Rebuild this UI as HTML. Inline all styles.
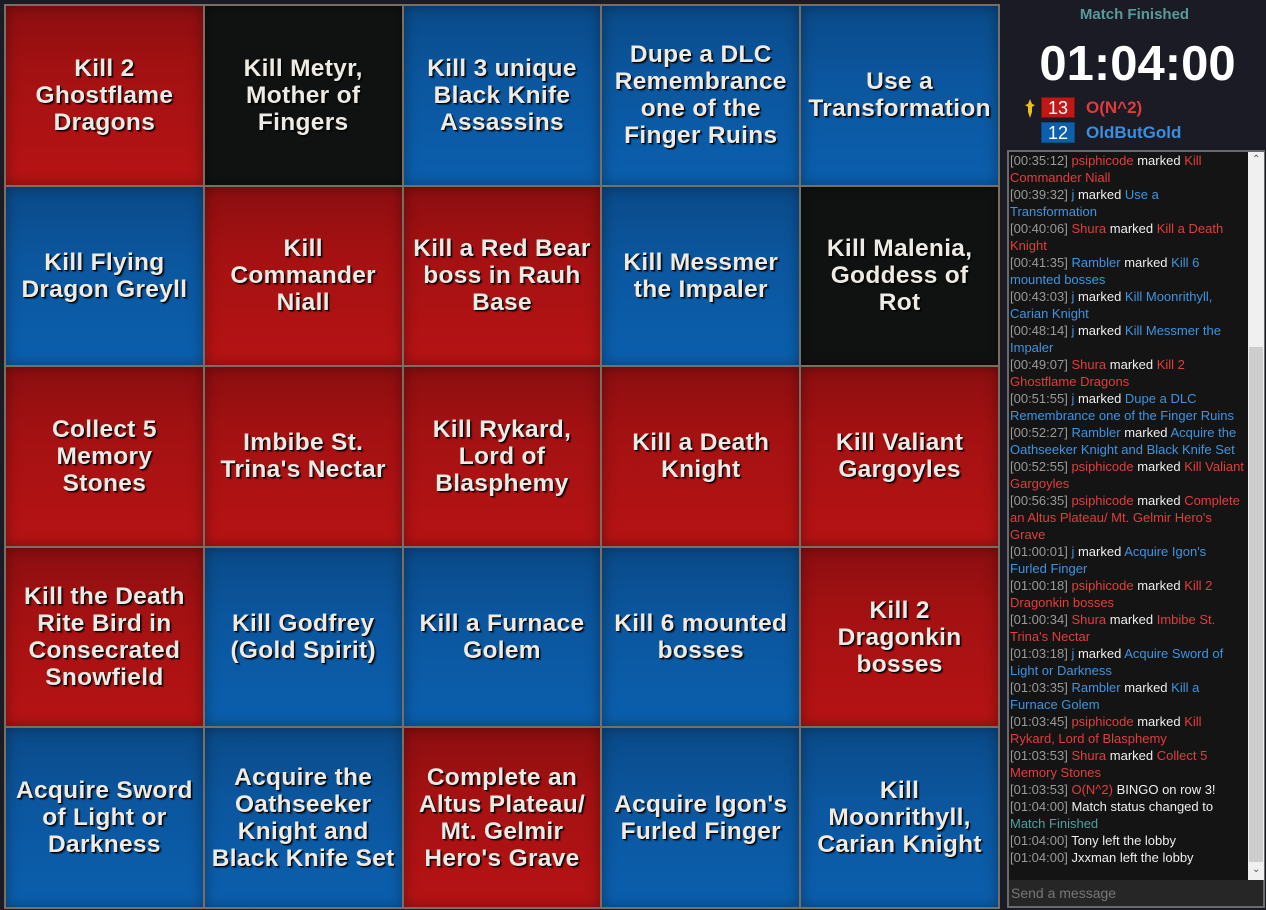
<!DOCTYPE html>
<html><head><meta charset="utf-8"><style>
*{margin:0;padding:0;box-sizing:border-box}
body{width:1266px;height:910px;background:#1b1b26;position:relative;overflow:hidden;font-family:"Liberation Sans",sans-serif}
#grid{position:absolute;left:4px;top:4px;width:996px;height:905px;background:#776f63;display:grid;grid-template-columns:repeat(5,1fr);grid-template-rows:repeat(5,1fr);gap:2px;padding:2px}
.c{display:flex;align-items:center;justify-content:center;text-align:center;color:#eeeae4;font-weight:bold;font-size:24.5px;line-height:27px;text-shadow:1px 1px 0 #000,2px 2px 1px rgba(0,0,0,.5);letter-spacing:.3px}
.r{background:linear-gradient(#8c0e10,#a31112 35%,#b71314);box-shadow:inset 0 0 14px rgba(0,0,0,.35)}
.b{background:linear-gradient(#0a4a88,#0b569e 40%,#0b5fae);box-shadow:inset 0 0 14px rgba(0,0,0,.35)}
.k{background:#101212;box-shadow:inset 0 0 10px rgba(0,0,0,.4)}
#title{position:absolute;left:1003px;width:263px;top:6px;text-align:center;color:#5b9a9a;font-weight:bold;font-size:15px}
#timer{position:absolute;left:1006px;width:263px;top:36px;text-align:center;color:#fff;font-weight:bold;font-size:49px;line-height:56px}
.sc{position:absolute;left:1041px;width:34px;height:21px;color:#fff;font-size:18px;text-align:center;line-height:21px}
.nm{position:absolute;left:1086px;font-size:17px;font-weight:bold;line-height:21px}
#chat{position:absolute;left:1007px;top:150px;width:258px;height:758px;border:2px solid #6a6a6a;background:#141414}
#log{position:absolute;left:1px;top:0;width:238px;font-size:13px;line-height:17px;color:#eee;white-space:nowrap}
#log div{height:17px}
.t{color:#9a9a9a}.R{color:#e33d3d}.B{color:#3f94e0}.T{color:#4fa0a0}
#sb{position:absolute;left:239px;top:0;width:16px;height:728px;background:#f0f0f0}
#th{position:absolute;left:1px;top:195px;width:14px;height:515px;background:#cdcdcd}
#inp{position:absolute;left:0;top:728px;width:254px;height:26px;background:#262626;color:#777;font-size:14px;line-height:26px;padding-left:2px}
</style></head><body>
<div id="grid">
<div class="c r">Kill 2<br>Ghostflame<br>Dragons</div>
<div class="c k">Kill Metyr,<br>Mother of<br>Fingers</div>
<div class="c b">Kill 3 unique<br>Black Knife<br>Assassins</div>
<div class="c b">Dupe a DLC<br>Remembrance<br>one of the<br>Finger Ruins</div>
<div class="c b">Use a<br>Transformation</div>
<div class="c b">Kill Flying<br>Dragon Greyll</div>
<div class="c r">Kill<br>Commander<br>Niall</div>
<div class="c r">Kill a Red Bear<br>boss in Rauh<br>Base</div>
<div class="c b">Kill Messmer<br>the Impaler</div>
<div class="c k">Kill Malenia,<br>Goddess of<br>Rot</div>
<div class="c r">Collect 5<br>Memory<br>Stones</div>
<div class="c r">Imbibe St.<br>Trina's Nectar</div>
<div class="c r">Kill Rykard,<br>Lord of<br>Blasphemy</div>
<div class="c r">Kill a Death<br>Knight</div>
<div class="c r">Kill Valiant<br>Gargoyles</div>
<div class="c r">Kill the Death<br>Rite Bird in<br>Consecrated<br>Snowfield</div>
<div class="c b">Kill Godfrey<br>(Gold Spirit)</div>
<div class="c b">Kill a Furnace<br>Golem</div>
<div class="c b">Kill 6 mounted<br>bosses</div>
<div class="c r">Kill 2<br>Dragonkin<br>bosses</div>
<div class="c b">Acquire Sword<br>of Light or<br>Darkness</div>
<div class="c b">Acquire the<br>Oathseeker<br>Knight and<br>Black Knife Set</div>
<div class="c r">Complete an<br>Altus Plateau/<br>Mt. Gelmir<br>Hero's Grave</div>
<div class="c b">Acquire Igon's<br>Furled Finger</div>
<div class="c b">Kill<br>Moonrithyll,<br>Carian Knight</div>
</div>
<div id="title">Match Finished</div>
<div id="timer">01:04:00</div>
<svg style="position:absolute;left:1024px;top:99px" width="12" height="20" viewBox="0 0 12 20"><path d="M6 0 L8 5 L11 6 L8 8 L8 13 L6 19 L4 13 L4 8 L1 6 L4 5 Z" fill="#e8c020"/></svg>
<div class="sc" style="top:97px;background:#c01818;border:1px solid #801010">13</div>
<div class="nm" style="top:97px;color:#e03a3a">O(N^2)</div>
<div class="sc" style="top:122px;background:#0b5fae;border:1px solid #084880">12</div>
<div class="nm" style="top:122px;color:#3a8ee0">OldButGold</div>
<div id="chat">
<div id="log">
<div><span class="t">[00:35:12]</span> <span class="R">psiphicode</span> marked <span class="R">Kill</span></div>
<div class="R">Commander Niall</div>
<div><span class="t">[00:39:32]</span> <span class="B">j</span> marked <span class="B">Use a</span></div>
<div class="B">Transformation</div>
<div><span class="t">[00:40:06]</span> <span class="R">Shura</span> marked <span class="R">Kill a Death</span></div>
<div class="R">Knight</div>
<div><span class="t">[00:41:35]</span> <span class="B">Rambler</span> marked <span class="B">Kill 6</span></div>
<div class="B">mounted bosses</div>
<div><span class="t">[00:43:03]</span> <span class="B">j</span> marked <span class="B">Kill Moonrithyll,</span></div>
<div class="B">Carian Knight</div>
<div><span class="t">[00:48:14]</span> <span class="B">j</span> marked <span class="B">Kill Messmer the</span></div>
<div class="B">Impaler</div>
<div><span class="t">[00:49:07]</span> <span class="R">Shura</span> marked <span class="R">Kill 2</span></div>
<div class="R">Ghostflame Dragons</div>
<div><span class="t">[00:51:55]</span> <span class="B">j</span> marked <span class="B">Dupe a DLC</span></div>
<div class="B">Remembrance one of the Finger Ruins</div>
<div><span class="t">[00:52:27]</span> <span class="B">Rambler</span> marked <span class="B">Acquire the</span></div>
<div class="B">Oathseeker Knight and Black Knife Set</div>
<div><span class="t">[00:52:55]</span> <span class="R">psiphicode</span> marked <span class="R">Kill Valiant</span></div>
<div class="R">Gargoyles</div>
<div><span class="t">[00:56:35]</span> <span class="R">psiphicode</span> marked <span class="R">Complete</span></div>
<div class="R">an Altus Plateau/ Mt. Gelmir Hero's</div>
<div class="R">Grave</div>
<div><span class="t">[01:00:01]</span> <span class="B">j</span> marked <span class="B">Acquire Igon's</span></div>
<div class="B">Furled Finger</div>
<div><span class="t">[01:00:18]</span> <span class="R">psiphicode</span> marked <span class="R">Kill 2</span></div>
<div class="R">Dragonkin bosses</div>
<div><span class="t">[01:00:34]</span> <span class="R">Shura</span> marked <span class="R">Imbibe St.</span></div>
<div class="R">Trina's Nectar</div>
<div><span class="t">[01:03:18]</span> <span class="B">j</span> marked <span class="B">Acquire Sword of</span></div>
<div class="B">Light or Darkness</div>
<div><span class="t">[01:03:35]</span> <span class="B">Rambler</span> marked <span class="B">Kill a</span></div>
<div class="B">Furnace Golem</div>
<div><span class="t">[01:03:45]</span> <span class="R">psiphicode</span> marked <span class="R">Kill</span></div>
<div class="R">Rykard, Lord of Blasphemy</div>
<div><span class="t">[01:03:53]</span> <span class="R">Shura</span> marked <span class="R">Collect 5</span></div>
<div class="R">Memory Stones</div>
<div><span class="t">[01:03:53]</span> <span class="R">O(N^2)</span> BINGO on row 3!</div>
<div><span class="t">[01:04:00]</span> Match status changed to</div>
<div class="T">Match Finished</div>
<div><span class="t">[01:04:00]</span> Tony left the lobby</div>
<div><span class="t">[01:04:00]</span> Jxxman left the lobby</div>
</div>
<div id="sb"><div style="position:absolute;top:2px;left:4px;font-size:10px;color:#555">&#8963;</div><div id="th"></div><div style="position:absolute;top:712px;left:4px;font-size:10px;color:#555">&#8964;</div></div>
<div id="inp">Send a message</div>
</div>
</body></html>
